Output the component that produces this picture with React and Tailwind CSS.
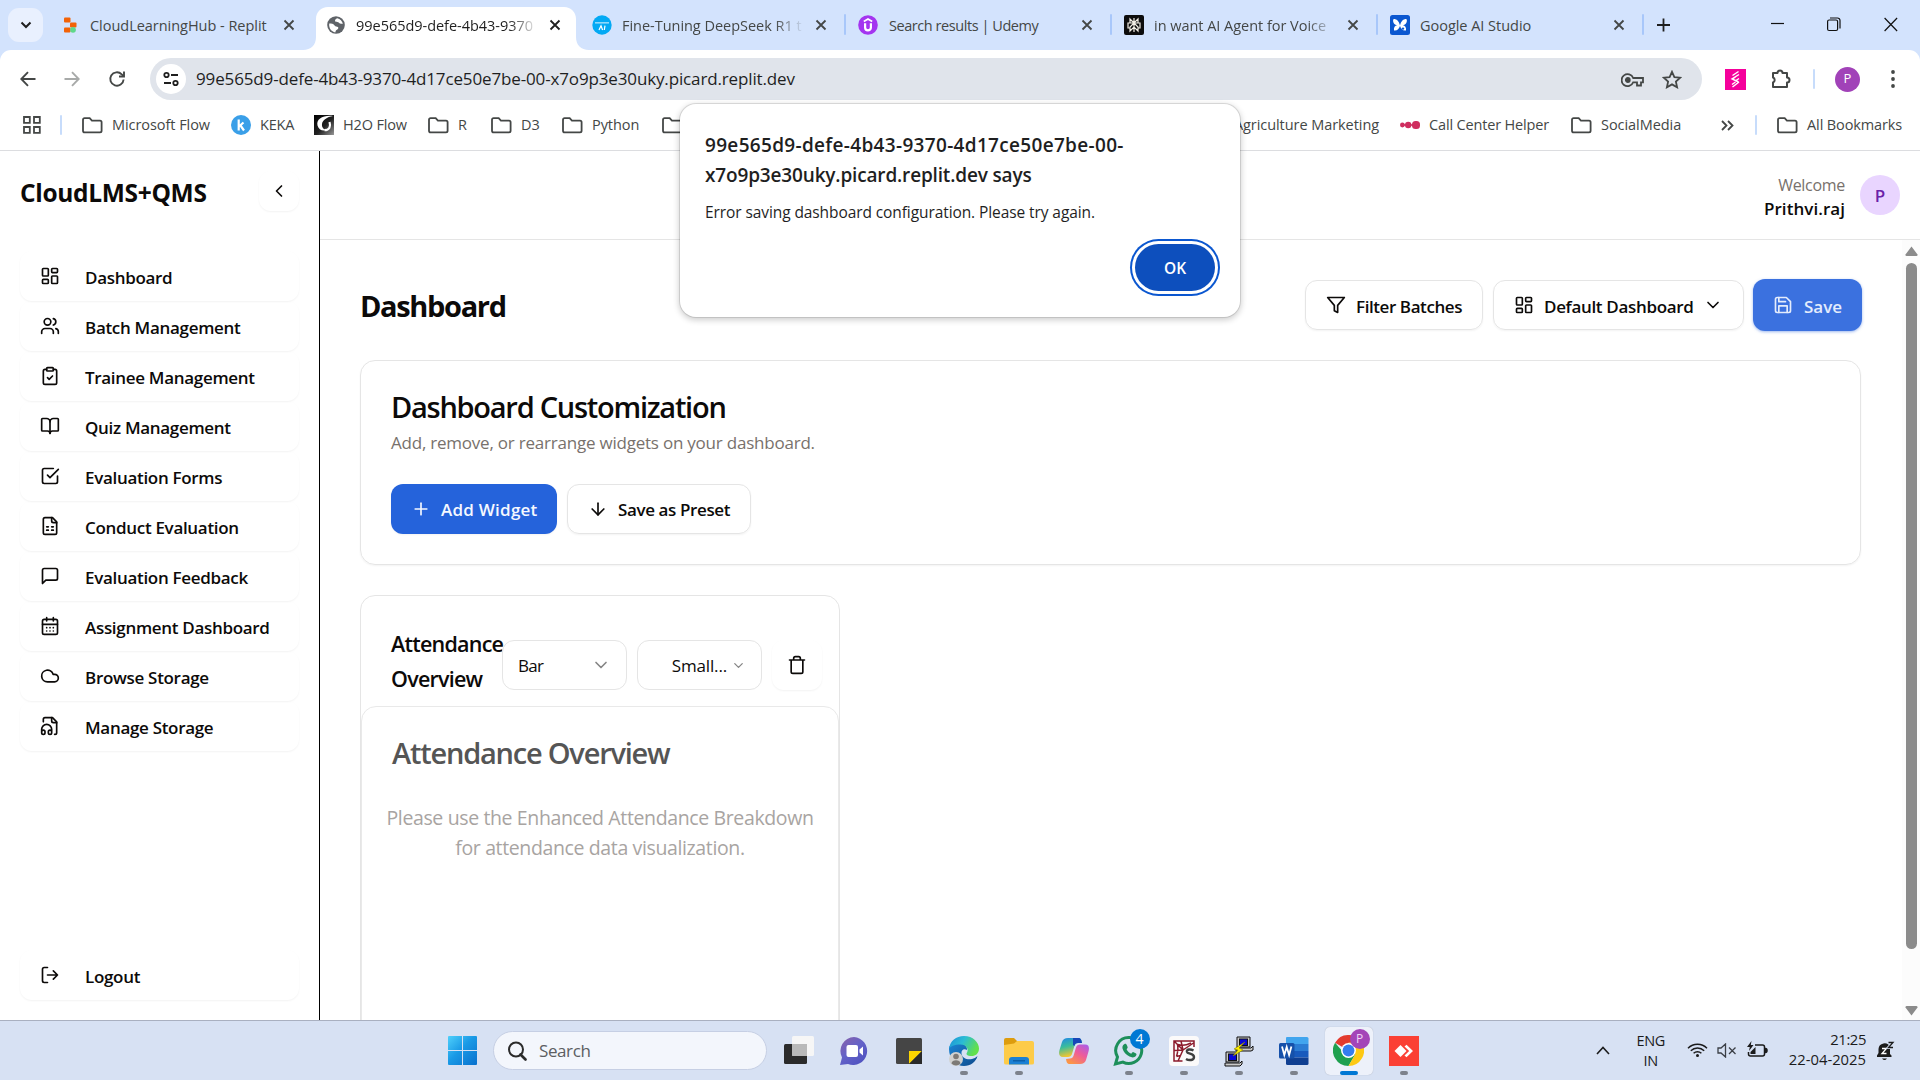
import { ArrowDown, BookOpen, ChevronDown, ChevronLeft, ClipboardCheck, Cloud, LayoutDashboard, Plus, Users } from "lucide-react";

/* ---------- shared drawing helpers ---------- */

function Stroke({ size = 20, children, className = "", width = 2 }) {
  return (
    <svg width={size} height={size} viewBox="0 0 24 24" fill="none" stroke="currentColor" strokeWidth={width} strokeLinecap="round" strokeLinejoin="round" className={`shrink-0 ${className}`}>
      {children}
    </svg>
  );
}

const CheckSquare = () => (
  <Stroke>
    <path d="m9 11 3 3L22 4" />
    <path d="M21 12v7a2 2 0 0 1-2 2H5a2 2 0 0 1-2-2V5a2 2 0 0 1 2-2h11" />
  </Stroke>
);
const FileSheet = () => (
  <Stroke>
    <path d="M15 2H6a2 2 0 0 0-2 2v16a2 2 0 0 0 2 2h12a2 2 0 0 0 2-2V7Z" />
    <path d="M14 2v4a2 2 0 0 0 2 2h4M8 13h2M14 13h2M8 17h2M14 17h2" />
  </Stroke>
);
const Message = () => (
  <Stroke>
    <path d="M21 15a2 2 0 0 1-2 2H7l-4 4V5a2 2 0 0 1 2-2h14a2 2 0 0 1 2 2z" />
  </Stroke>
);
const Calendar = () => (
  <Stroke>
    <rect width="18" height="18" x="3" y="4" rx="2" />
    <path d="M8 2v4M16 2v4M3 10h18M8 14h.01M12 14h.01M16 14h.01M8 18h.01M12 18h.01M16 18h.01" />
  </Stroke>
);
const FileAudio = () => (
  <Stroke>
    <path d="M17.5 22h.5a2 2 0 0 0 2-2V7l-5-5H6a2 2 0 0 0-2 2v3" />
    <path d="M14 2v4a2 2 0 0 0 2 2h4" />
    <path d="M2 19a2 2 0 1 1 4 0v1a2 2 0 1 1-4 0v-4a6 6 0 0 1 12 0v4a2 2 0 1 1-4 0v-1a2 2 0 1 1 4 0" />
  </Stroke>
);
const Exit = () => (
  <Stroke>
    <path d="M9 21H5a2 2 0 0 1-2-2V5a2 2 0 0 1 2-2h4M16 17l5-5-5-5M21 12H9" />
  </Stroke>
);
const Trash = () => (
  <Stroke>
    <path d="M3 6h18M19 6v14c0 1-1 2-2 2H7c-1 0-2-1-2-2V6M8 6V4c0-1 1-2 2-2h4c1 0 2 1 2 2v2" />
  </Stroke>
);
const Funnel = () => (
  <Stroke>
    <path d="M22 3H2l8 9.46V19l4 2v-8.54z" />
  </Stroke>
);
const Disk = () => (
  <Stroke>
    <path d="M19 21H5a2 2 0 0 1-2-2V5a2 2 0 0 1 2-2h11l5 5v11a2 2 0 0 1-2 2z" />
    <path d="M17 21v-8H7v8M7 3v5h8" />
  </Stroke>
);

/* ---------- browser chrome ---------- */

const Close = ({ className = "text-[#444746]" }) => (
  <svg width="12" height="12" viewBox="0 0 12 12" className={`shrink-0 ${className}`}>
    <path d="M1.5 1.5l9 9M10.5 1.5l-9 9" stroke="currentColor" strokeWidth="1.8" />
  </svg>
);

const ReplitIcon = () => (
  <svg width="20" height="20" viewBox="0 0 20 20" className="shrink-0">
    <rect x="4" y="2.5" width="6.5" height="5" rx="1" fill="#f26207" />
    <rect x="10" y="7.5" width="6.5" height="5" rx="1" fill="#f26207" />
    <rect x="4" y="12.5" width="6.5" height="5" rx="1" fill="#f26207" />
    <circle cx="13" cy="14.8" r="2.9" fill="#5fd88a" />
  </svg>
);
const GlobeIcon = () => (
  <svg width="20" height="20" viewBox="0 0 20 20" className="shrink-0">
    <circle cx="10" cy="10" r="8.8" fill="#5f6368" />
    <path d="M3.2 8.6C5.8 8 7.5 8.6 8.6 10.4c.9 1.4 2.3.8 3.3 1.6 1.1 1 .1 2.3-1 2.8-1.3.7-1.3 1.7-1.6 2.6-4-.6-6.6-4-6.1-8.8zM11.3 3.2c-1.6.8-2.6 1.7-2.2 2.8.4 1.2 2 .9 3.2 1.3 1 .4 1.3 1.5 2.6 1.5h2c-.6-2.8-2.8-5-5.6-5.6z" fill="#fff" />
  </svg>
);
const TowardsAiIcon = () => (
  <svg width="20" height="20" viewBox="0 0 20 20" className="shrink-0">
    <circle cx="10" cy="10" r="9.7" fill="#03a9f4" />
    <rect x="3" y="7" width="14" height="1.6" fill="#8fd8fa" />
    <path d="M7 15l2-4.3 1.6 4.3M13 10.7l-.7 4.3" stroke="#fff" strokeWidth="1.2" fill="none" />
  </svg>
);
const UdemyIcon = () => (
  <svg width="20" height="20" viewBox="0 0 20 20" className="shrink-0">
    <circle cx="10" cy="10" r="9.8" fill="#a435f0" />
    <path d="M5.800 6.500L10 4l4.200 2.500" stroke="#fff" strokeWidth="1.7" fill="none" />
    <path d="M7.100 8.200v4.300c0 3.700 5.800 3.700 5.800 0V8.200" stroke="#fff" strokeWidth="2.2" fill="none" />
  </svg>
);
const PerplexIcon = () => (
  <svg width="20" height="20" viewBox="0 0 20 20" className="shrink-0">
    <rect width="20" height="20" rx="2" fill="#0d0d0d" />
    <path d="M10 3v14M10 8L6 4v4h8V4l-4 4zM10 8l-4 4v4l4-4 4 4v-4l-4-4M6 8H4v5h2M14 8h2v5h-2" stroke="#f3efe6" strokeWidth="1.2" fill="none" />
  </svg>
);
const StudioIcon = () => (
  <svg width="20" height="20" viewBox="0 0 20 20" className="shrink-0">
    <rect width="20" height="20" rx="2.5" fill="#0b57d0" />
    <path d="M10 10.500C9 6 6.500 4 4 4c-1.500 0-1.500 5.500 3 6.300C5 10.500 3.500 12.500 4 15.500c3 .6 5-1.500 6-4.500 1 3 3 5.100 6 4.500.5-3-1-5-3-5.200 4.500-.8 4.500-6.300 3-6.300-2.500 0-5 2-6 6.500z" fill="#fff" />
    <circle cx="13" cy="13.6" r="1.2" fill="#0b57d0" />
  </svg>
);

const TABS = [
  { icon: <ReplitIcon />, title: "CloudLearningHub - Replit" },
  { icon: <GlobeIcon />, title: "99e565d9-defe-4b43-9370", active: true, fade: true },
  { icon: <TowardsAiIcon />, title: "Fine-Tuning DeepSeek R1 t", divider: true, fade: true },
  { icon: <UdemyIcon />, title: "Search results | Udemy", divider: true, tight: true },
  { icon: <PerplexIcon />, title: "in want AI Agent for Voice", divider: true, fade: true },
  { icon: <StudioIcon />, title: "Google AI Studio", divider: true },
];

function Tab({ icon, title, active, divider, tight, fade }) {
  return (
    <div className={`relative flex h-full w-[266px] shrink-0 items-start ${active ? "text-[#1f1f1f]" : "text-[#444746]"}`}>
      {active && (
        <svg width="286" height="43" viewBox="0 0 286 43" className="absolute -left-[11px] top-[7px]">
          <path d="M0 43c8 0 13-5 13-13V12C13 5 18 0 25 0h236c7 0 12 5 12 12v18c0 8 5 13 13 13z" fill="#fff" />
        </svg>
      )}
      <div className="relative flex h-[50px] w-full items-center pl-[12px]">
        {icon}
        <span className={`ml-[10px] w-[182px] whitespace-nowrap pt-[2px] text-[14.5px] ${fade ? "[mask-image:linear-gradient(to_right,black_84%,transparent)]" : ""} ${tight ? "pl-px tracking-[-0.44px]" : "tracking-[-0.03px]"}`}>{title}</span>
        <Close className={`ml-[11px] ${active ? "text-[#1f1f1f]" : "text-[#444746]"}`} />
      </div>
      {divider && <div className="absolute right-0 top-[14px] h-[21px] w-[2px] rounded bg-[#a8c7fa]" />}
    </div>
  );
}

function TabStrip() {
  return (
    <div className="flex h-[50px] bg-[#d3e3fd]">
      <div className="ml-[8px] mr-[5px] mt-[8px] flex h-[34px] w-[35px] items-center justify-center rounded-[11px] bg-[#e9f0fe]">
        <svg width="12" height="8" viewBox="0 0 12 8"><path d="M1.5 1.5L6 6l4.500-4.500" stroke="#1f1f1f" strokeWidth="2" fill="none" /></svg>
      </div>
      {TABS.map((t) => <Tab key={t.title} {...t} />)}
      <div className="ml-[13px] mt-[18px]">
        <svg width="13" height="14" viewBox="0 0 13 14"><path d="M6.5 .5v13M0 7h13" stroke="#1f1f1f" strokeWidth="1.8" /></svg>
      </div>
      <div className="ml-auto flex pt-[17px]">
        <svg width="14" height="14" viewBox="0 0 14 14" className="mr-[42px]"><path d="M0 6.500h13" stroke="#111" strokeWidth="1.2" /></svg>
        <svg width="14" height="15" viewBox="0 0 14 15" className="mr-[43px]" fill="none" stroke="#111" strokeWidth="1.2"><rect x=".6" y="3" width="10" height="10.5" rx="1.5" /><path d="M3 1h7.500a2.500 2.500 0 0 1 2.500 2.500V11.500" /></svg>
        <svg width="14" height="15" viewBox="0 0 14 15" className="mr-[22px]"><path d="M.6 1l12.500 13M13.100 1L.6 14" stroke="#111" strokeWidth="1.2" /></svg>
      </div>
    </div>
  );
}

function Toolbar() {
  return (
    <div className="flex h-[58px] items-center bg-[#d3e3fd]">
      <div className="flex h-full w-full items-center rounded-t-[11px] bg-white text-[#444746]">
        <svg width="16" height="16" viewBox="0 0 16 16" className="ml-[20px]" fill="none" stroke="#444746" strokeWidth="1.9"><path d="M15.500 8H1.500M8 1.200L1.300 8 8 14.800" /></svg>
        <svg width="16" height="16" viewBox="0 0 16 16" className="ml-[28px]" fill="none" stroke="#a8aaa9" strokeWidth="1.9"><path d="M.5 8h14M8 1.200L14.700 8 8 14.800" /></svg>
        <svg width="18" height="18" viewBox="0 0 18 18" className="ml-[28px]" fill="none" stroke="#444746" strokeWidth="1.9"><path d="M15.600 9.500A6.700 6.700 0 1 1 13.700 4.300L15.600 6.200" /><path d="M16 1.500v5h-5" /></svg>
        <div className="ml-[24px] flex h-[42px] w-[1552px] items-center rounded-full bg-[#e0e4eb]">
          <div className="ml-[6px] flex size-[30px] items-center justify-center rounded-full bg-white">
            <svg width="16" height="16" viewBox="0 0 16 16" fill="none" stroke="#1f1f1f" strokeWidth="1.8"><circle cx="3.5" cy="4" r="2.2" /><path d="M8 4h7M1 12h7" /><circle cx="12.5" cy="12" r="2.2" /></svg>
          </div>
          <span className="ml-[10px] text-[17px] tracking-[-0.14px] text-[#1f1f1f]">99e565d9-defe-4b43-9370-4d17ce50e7be-00-x7o9p3e30uky.picard.replit.dev</span>
          <svg width="23" height="16" viewBox="0 0 23 16" className="ml-auto mr-[18px] mt-px" fill="none" stroke="#444746" strokeWidth="1.8"><path d="M12.200 6A6 6 0 1 0 12.200 10.300H16V13.500H20V10.300H22V6z" /><circle cx="6.8" cy="8" r="2" fill="#444746" /></svg>
          <svg width="20" height="19" viewBox="0 0 20 19" className="mr-[20px]" fill="none" stroke="#444746" strokeWidth="1.8"><path d="M10 1.800l2.400 5.300 5.800.6-4.300 3.900 1.200 5.700L10 14.400l-5.100 2.900 1.200-5.700L1.800 7.700l5.800-.6z" /></svg>
        </div>
        <svg width="21" height="21" viewBox="0 0 21 21" className="ml-[23px]"><rect width="21" height="21" fill="#f5009b" /><path d="M13.500 2.500L7.500 6.500M14 5.500L7 10l6.500 3M7.500 10l3-2M14 9.500l-3 2M14 13l-6.500 5M7 15.500l3.500-2.500" stroke="#fff" strokeWidth="1.4" fill="none" /></svg>
        <svg width="22" height="22" viewBox="0 0 22 22" className="ml-[24px] text-[#444746]"><path d="M3 5h4.500a2.500 2.500 0 0 1 5 0H17v4.500a2.500 2.500 0 0 1 0 5V19H3v-4.500a2.700 2.700 0 0 0 0-5z" fill="none" stroke="currentColor" strokeWidth="2" strokeLinejoin="round" /></svg>
        <div className="ml-[21px] h-[20px] w-[2px] rounded bg-[#c7dcfb]" />
        <div className="ml-[20px] flex size-[25px] items-center justify-center rounded-full bg-[#a142b8] text-[13px] text-white">P</div>
        <svg width="6" height="20" viewBox="0 0 6 20" className="ml-[30px]" fill="#444746"><circle cx="3" cy="3" r="1.9" /><circle cx="3" cy="10" r="1.9" /><circle cx="3" cy="17" r="1.9" /></svg>
      </div>
    </div>
  );
}

const Folder = () => (
  <svg width="21" height="17" viewBox="0 0 21 17" className="shrink-0"><path d="M1 2.800Q1 1.200 2.600 1.200H7.700L9.900 3.600H18Q19.600 3.600 19.600 5.200V13.800Q19.600 15.400 18 15.400H2.600Q1 15.400 1 13.800z" fill="none" stroke="#444746" strokeWidth="1.8" /></svg>
);
const Keka = () => (
  <svg width="20" height="20" viewBox="0 0 20 20"><circle cx="10" cy="10" r="10" fill="#3a9fe8" /><path d="M7.700 4.500v11M8 11.500l4.500-4M9.500 10.500l3.500 5" stroke="#fff" strokeWidth="2.2" fill="none" /></svg>
);
const H2O = () => (
  <svg width="20" height="20" viewBox="0 0 20 20">
    <defs><linearGradient id="h2o" x1="0" y1="0" x2="1" y2="1"><stop offset="0" stopColor="#000" /><stop offset=".55" stopColor="#222" /><stop offset="1" stopColor="#999" /></linearGradient></defs>
    <rect width="20" height="20" fill="url(#h2o)" />
    <path d="M19 1C9 0 2 4 3.500 10.500c1 4 5 6 9 4.500-3-.5-5-3-4.500-6C8.500 5 13 2 19 1z" fill="#fff" />
    <path d="M10.500 15.200c5 0 6.500-4 5-8.200" stroke="#fff" strokeWidth="2.2" fill="none" />
  </svg>
);
const CallCenter = () => (
  <svg width="20" height="10" viewBox="0 0 20 10" fill="#cf2e5f"><circle cx="2.4" cy="5" r="2.4" /><circle cx="8.2" cy="5" r="3.2" /><rect x="12" y="1" width="8" height="8" rx="3.5" /><path d="M2 4.200h12v1.600H2z" /></svg>
);

function Bookmark({ icon, label, className = "" }) {
  return (
    <div className={`flex shrink-0 items-center gap-[9px] whitespace-nowrap ${className}`}>
      {icon}
      <span>{label}</span>
    </div>
  );
}

function BookmarkBar() {
  return (
    <div className="flex h-[43px] items-center border-b border-[#dcdde0] bg-white pb-[8px] text-[14.5px] tracking-[-0.06px] text-[#444746]">
      <svg width="18" height="18" viewBox="0 0 18 18" className="ml-[23px] shrink-0" fill="none" stroke="#444746" strokeWidth="1.8"><path d="M1 1h5.800v5.800H1zM11 1h5.800v5.800H11zM1 11h5.800v5.800H1zM11 11h5.800v5.800H11z" /></svg>
      <div className="ml-[19px] mr-[20px] h-[20px] w-[2px] shrink-0 rounded bg-[#c7dcfb]" />
      <Bookmark icon={<Folder />} label="Microsoft Flow" className="w-[149px]" />
      <Bookmark icon={<Keka />} label="KEKA" className="w-[83px] gap-[8px] tracking-[-0.2px]" />
      <Bookmark icon={<H2O />} label="H2O Flow" className="w-[114px] gap-[7px] tracking-[-0.15px]" />
      <Bookmark icon={<Folder />} label="R" className="w-[63px]" />
      <Bookmark icon={<Folder />} label="D3" className="w-[71px]" />
      <Bookmark icon={<Folder />} label="Python" className="w-[100px]" />
      <Bookmark icon={<Folder />} label="" className="w-[30px]" />
      <Bookmark label="Agriculture Marketing" className="ml-auto mr-[21px]" />
      <Bookmark icon={<CallCenter />} label="Call Center Helper" className="w-[171px] gap-[6px] tracking-[-0.16px]" />
      <Bookmark icon={<Folder />} label="SocialMedia" className="w-[150px]" />
      <svg width="13" height="11" viewBox="0 0 13 11" className="mr-[21px] shrink-0" fill="none" stroke="#444746" strokeWidth="1.8"><path d="M1 1l4.500 4.500L1 10M7 1l4.500 4.500L7 10" /></svg>
      <div className="h-[20px] w-[2px] shrink-0 rounded bg-[#c7dcfb]" />
      <Bookmark icon={<Folder />} label="All Bookmarks" className="ml-[20px] mr-[18px] tracking-[-0.13px]" />
    </div>
  );
}

function AlertDialog() {
  return (
    <div className="absolute left-[680px] top-[104px] h-[213px] w-[560px] rounded-[16px] bg-white pl-[25px] pt-[26px] text-[#1f1f1f] shadow-[0_0_0_1px_rgba(0,0,0,0.1),0_2px_6px_1px_rgba(0,0,0,0.2)]">
      <div className="text-[19px] font-semibold leading-[30px]">
        <div className="tracking-[0.32px]">99e565d9-defe-4b43-9370-4d17ce50e7be-00-</div>
        <div className="tracking-[-0.16px]">x7o9p3e30uky.picard.replit.dev says</div>
      </div>
      <div className="mt-[10px] text-[15.5px] leading-[24px] tracking-[-0.09px]">Error saving dashboard configuration. Please try again.</div>
      <div className="mr-[25px] mt-[20px] flex justify-end">
        <button className="h-[47px] w-[80px] rounded-[24px] bg-[#0d4fbd] pt-[2px] text-[15.5px] font-semibold text-white ring-2 ring-[#0b57d0] ring-offset-[3px] ring-offset-white">OK</button>
      </div>
    </div>
  );
}

/* ---------- web page ---------- */

const NAV = [
  { icon: <LayoutDashboard size={20} />, label: "Dashboard" },
  { icon: <Users size={20} />, label: "Batch Management" },
  { icon: <ClipboardCheck size={20} />, label: "Trainee Management" },
  { icon: <BookOpen size={20} />, label: "Quiz Management" },
  { icon: <CheckSquare />, label: "Evaluation Forms" },
  { icon: <FileSheet />, label: "Conduct Evaluation" },
  { icon: <Message />, label: "Evaluation Feedback" },
  { icon: <Calendar />, label: "Assignment Dashboard" },
  { icon: <Cloud size={20} />, label: "Browse Storage" },
  { icon: <FileAudio />, label: "Manage Storage" },
];

function NavItem({ icon, label }) {
  return (
    <a className="flex h-[50px] items-center gap-[25px] rounded-[12px] pl-[20px] text-[17px] font-semibold tracking-[-0.31px] shadow-[0_1px_2px_0_rgba(0,0,0,0.05)]">
      {icon}
      <span className="pt-[3px]">{label}</span>
    </a>
  );
}

function Sidebar() {
  return (
    <aside className="flex w-[320px] shrink-0 flex-col border-r border-black px-[20px] pb-[20px] pt-[20px]">
      <div className="flex h-[40px] items-center justify-between">
        <span className="pt-[4px] text-[24.5px] font-bold tracking-[-0.32px]">CloudLMS+QMS</span>
        <div className="flex size-[40px] items-center justify-center rounded-[12px] shadow-[0_1px_2px_0_rgba(0,0,0,0.05)]">
          <ChevronLeft size={20} />
        </div>
      </div>
      <nav className="mt-[40px]">
        {NAV.map((n) => <NavItem key={n.label} {...n} />)}
      </nav>
      <div className="mt-auto">
        <NavItem icon={<Exit />} label="Logout" />
      </div>
    </aside>
  );
}

function Button({ icon, label, className }) {
  return (
    <button className={`flex h-[50px] items-center rounded-[12px] text-[17px] font-semibold shadow-[0_1px_2px_0_rgba(0,0,0,0.05)] ${className}`}>
      {icon}
      {label}
    </button>
  );
}

function Customization() {
  return (
    <section className="mr-px mt-[29px] h-[205px] shrink-0 rounded-[15px] border border-[#e5e5e5] px-[30px] pt-[27px] shadow-[0_1px_2px_0_rgba(0,0,0,0.05)]">
      <h2 className="text-[29px] font-semibold leading-[38px] tracking-[-1.26px]">Dashboard Customization</h2>
      <p className="mt-[4px] text-[17px] leading-[25px] tracking-[-0.22px] text-[#78716c]">Add, remove, or rearrange widgets on your dashboard.</p>
      <div className="mt-[29px] flex gap-[10px]">
        <Button icon={<Plus size={20} />} label={<span className="pt-[2px]">Add Widget</span>} className="w-[166px] gap-[10px] bg-[#2563db] pl-[20px] tracking-[0.24px] text-[#f5f8ff]" />
        <Button icon={<ArrowDown size={20} />} label={<span className="pt-[2px]">Save as Preset</span>} className="w-[184px] gap-[10px] border border-[#e5e5e5] pl-[20px] tracking-[-0.38px]" />
      </div>
    </section>
  );
}

function Select({ label, className, chevron }) {
  return (
    <div className={`flex h-[50px] w-[125px] shrink-0 items-center rounded-[12px] border border-[#e5e5e5] bg-white text-[17px] ${className}`}>
      <span className="pt-[2px]">{label}</span>
      <ChevronDown size={chevron} className="text-[#858585]" />
    </div>
  );
}

function Widget() {
  return (
    <section className="mt-[30px] h-[500px] w-[480px] shrink-0 rounded-t-[15px] border border-[#e5e5e5]">
      <div className="flex h-[110px] pl-[30px]">
        <h3 className="w-[111px] shrink-0 pt-[30px] text-[21.5px] font-semibold leading-[35px] tracking-[-0.76px]">Attendance Overview</h3>
        <div className="flex pt-[44px]">
          <Select label="Bar" chevron={20} className="justify-between pl-[15px] pr-[15px] tracking-[-0.7px]" />
          <Select label="Small..." chevron={15} className="ml-[10px] justify-end gap-[4px] pr-[15px] tracking-[-0.16px]" />
          <div className="ml-[10px] flex size-[50px] items-center justify-center rounded-[12px] shadow-[0_1px_2px_0_rgba(0,0,0,0.05)]">
            <Trash />
          </div>
        </div>
      </div>
      <div className="h-[390px] rounded-t-[15px] border border-[#e9e9e9] pt-[27px]">
        <h4 className="pl-[30px] text-[29px] font-semibold leading-[38px] tracking-[-1.22px] text-[#555]">Attendance Overview</h4>
        <p className="mt-[31px] text-center text-[19.5px] leading-[30px] tracking-[-0.37px] text-[#a8a4a2]">
          Please use the Enhanced Attendance Breakdown<br />for attendance data visualization.
        </p>
      </div>
    </section>
  );
}

function Page() {
  return (
    <div className="flex h-[869px] overflow-hidden bg-white text-[#0c0a09]">
      <Sidebar />
      <div className="flex min-w-0 flex-1 flex-col">
        <header className="flex h-[89px] shrink-0 items-center justify-end gap-[15px] border-b border-[#e5e5e5] pr-[20px]">
          <div className="pt-[3px] text-right leading-[24px]">
            <div className="text-[16px] tracking-[-0.3px] text-[#78716c]">Welcome</div>
            <div className="text-[17px] font-semibold tracking-[0.05px]">Prithvi.raj</div>
          </div>
          <div className="flex size-[40px] items-center justify-center rounded-full bg-[#e9d5ff] pt-[1px] text-[17px] font-semibold text-[#6b21a8]">P</div>
        </header>
        <div className="flex min-h-0 flex-1">
          <main className="flex min-w-0 flex-1 flex-col overflow-hidden pl-[40px] pr-[40px]">
            <div className="flex pt-[40px]">
              <h1 className="flex h-[51px] items-center pt-[1px] text-[29px] font-bold tracking-[-1.35px]">Dashboard</h1>
              <div className="ml-auto flex">
                <Button icon={<Funnel />} label={<span className="pt-[3px]">Filter Batches</span>} className="w-[178px] gap-[10px] border border-[#e5e5e5] pl-[20px] tracking-[-0.42px]" />
                <Button icon={<LayoutDashboard size={20} />} label={<span className="flex items-center pt-[3px]">Default Dashboard<ChevronDown size={20} className="-mt-[4px] ml-[10px]" /></span>} className="ml-[10px] w-[251px] gap-[10px] border border-[#e5e5e5] pl-[20px] tracking-[-0.33px]" />
                <Button icon={<Disk />} label={<span className="pt-[3px]">Save</span>} className="-mt-[1px] ml-[9px] h-[52px] w-[109px] gap-[11px] bg-[#3b71df] pl-[20px] text-[#e4ecfc] shadow-[0_1px_3px_0_rgba(59,113,223,0.5)]" />
              </div>
            </div>
            <Customization />
            <Widget />
          </main>
          <div className="flex w-[18px] shrink-0 flex-col items-center bg-[#fcfcfc]">
            <svg width="13" height="11" viewBox="0 0 13 11" className="mt-[6px]"><path d="M6.500 .5L12.500 8.500Q12.800 10 11.500 10H1.500Q.2 10 .5 8.500z" fill="#8b8b8b" /></svg>
            <div className="mt-[6px] h-[686px] w-[11px] rounded-full bg-[#8b8b8b]" />
            <svg width="13" height="11" viewBox="0 0 13 11" className="mt-[56px]"><path d="M6.500 10.500L12.500 2.500Q12.800 1 11.500 1H1.500Q.2 1 .5 2.500z" fill="#8b8b8b" /></svg>
          </div>
        </div>
      </div>
    </div>
  );
}

/* ---------- taskbar ---------- */

const TaskView = () => (
  <svg width="30" height="30" viewBox="0 0 30 30">
    <rect x="0" y="8" width="23" height="20" rx="1.5" fill="#2b2b2b" />
    <rect x="8" y="0" width="22" height="20" rx="1.5" fill="#f6f6f6" />
    <path d="M8 8h15v12H9.500Q8 20 8 18.500z" fill="#b9b9b9" />
  </svg>
);
const Chat = () => (
  <svg width="30" height="30" viewBox="0 0 30 30">
    <defs><linearGradient id="chat" x1="0" y1="0" x2=".8" y2="1"><stop offset="0" stopColor="#8b62a8" /><stop offset=".5" stopColor="#6462c8" /><stop offset="1" stopColor="#4f52c0" /></linearGradient></defs>
    <path d="M15 1a14 14 0 1 1-6 27L1 29l2-7.500A14 14 0 0 1 15 1z" fill="url(#chat)" />
    <rect x="7.5" y="9" width="11.5" height="12" rx="2" fill="#fff" />
    <path d="M20.500 13.500L24 10.500v9l-3.500-3z" fill="#fff" />
  </svg>
);
const Sticky = () => (
  <svg width="30" height="30" viewBox="0 0 30 30">
    <rect x="2" y="2" width="26" height="26" rx="1.5" fill="#454545" />
    <path d="M15 15h13L15 28z" fill="#fcd500" /><path d="M28 15v13H15z" fill="#2a2a2a" />
  </svg>
);
const Edge = () => (
  <svg width="32" height="32" viewBox="0 0 32 32">
    <defs>
      <linearGradient id="edgeTop" x1="0" y1="0" x2="1" y2=".4"><stop offset="0" stopColor="#1a8fd8" /><stop offset=".5" stopColor="#2bbcd4" /><stop offset="1" stopColor="#61e04c" /></linearGradient>
      <linearGradient id="edgeLow" x1="0" y1="0" x2="1" y2="1"><stop offset="0" stopColor="#1b86d6" /><stop offset="1" stopColor="#0d4a8c" /></linearGradient>
    </defs>
    <path d="M1 14c0-5 6-8 12-6 4 1.200 6.500 4 6 7-3-2-6 0-5.500 3.500C14 23 19 25 24 24c2-.4 4-1.500 5.500-3C28 27 22.500 31 16 31 8 31 1 24 1 14z" fill="url(#edgeLow)" />
    <path d="M1 14C2 6 8 1 16 1c9 0 15 6.500 15 12.500 0 5-3.500 7.500-7.500 7.500-4 0-6-1.500-4.500-3.500 2-3-.5-8-6.500-8C6.500 9.500 2 11.500 1 14z" fill="url(#edgeTop)" />
    <circle cx="8" cy="24" r="7" fill="#d1d1cf" /><circle cx="8" cy="21.5" r="2.8" fill="#7d7a76" /><path d="M3.500 28.500c0-4.500 9-4.500 9 0-2.500 2.500-6.500 2.500-9 0z" fill="#7d7a76" />
  </svg>
);
const Explorer = () => (
  <svg width="30" height="30" viewBox="0 0 30 30">
    <path d="M0 4Q0 2 2 2h8l3 3v5H0z" fill="#dd9c0e" />
    <path d="M0 9L10 7.500 13 5H28Q30 5 30 7V27Q30 28.500 28 28.500H2Q0 28.500 0 27z" fill="#fdcb48" />
    <path d="M5 28.500V24Q5 21 8 21h14q3 0 3 3v4.500z" fill="#1a80d4" /><rect x="9" y="24" width="12" height="1.5" fill="#0c5fa8" />
  </svg>
);
const Copilot = () => (
  <svg width="30" height="30" viewBox="0 0 30 30">
    <defs>
      <linearGradient id="cpa" x1="0" y1="0" x2=".3" y2="1"><stop offset="0" stopColor="#1f86ea" /><stop offset=".5" stopColor="#3bbd9b" /><stop offset="1" stopColor="#f6c62e" /></linearGradient>
      <linearGradient id="cpb" x1="1" y1="0" x2=".3" y2="1"><stop offset="0" stopColor="#a35cf0" /><stop offset=".5" stopColor="#ee5b9b" /><stop offset="1" stopColor="#fb9547" /></linearGradient>
    </defs>
    <path d="M9 2h10c3 0 3.500 2 4 5h-4c-2 0-3 1-3.600 3l-2.400 8c-.6 2-2 3-4 3H4c-4 0-4.500-3-3.500-7L3 6c.8-2.500 3-4 6-4z" fill="url(#cpa)" />
    <path d="M14 2h5c3 0 3.500 2 4 5h-4c-2 0-3 1-3.600 3L14 9z" fill="#1746b8" />
    <path d="M21 28H11c-3 0-3.500-2-4-5l4-.5c2 0 3-1 3.600-3L17 11.500c.6-2 2-3 4-3h5c4 0 4.500 3 3.500 7L27 24c-.8 2.500-3 4-6 4z" fill="url(#cpb)" />
  </svg>
);
const WhatsApp = () => (
  <svg width="32" height="32" viewBox="0 0 32 32">
    <path d="M16.500 2.500a13 13 0 1 1-6.600 24.600L2.500 29l2-7A13 13 0 0 1 16.500 2.500z" fill="none" stroke="#1d8f5a" strokeWidth="3" />
    <path d="M11.500 9c1.200-.5 2 .2 2.500 1.500l.6 1.500c.3 1-.5 1.500-1 2.200 1 2 2.500 3.500 4.700 4.500.8-.7 1.200-1.900 2.200-1.500l2.200 1c1 .5 1 1.500.3 2.600-1.500 2-4 2-6.500.8-3.500-1.700-6-4.500-7-8-.4-2 .5-4 2-4.600z" fill="#1d8f5a" />
  </svg>
);
const Spyder = () => (
  <svg width="30" height="30" viewBox="0 0 30 30">
    <rect width="30" height="30" rx="4" fill="#fbfafa" />
    <path d="M13.500 25H5V5H25V11M14 14L5.500 5.500M14 14L12 5M14 14L24.500 7M5 14.500L14 14M9 25l5-11M8.500 8.500c1 4 .5 7-1 12M9 8.500c4 1.500 9 .5 13-1.500M7.500 20.500l4-1" stroke="#8c1a2b" strokeWidth="1.5" fill="none" />
    <path d="M24.500 14.500c-3-1.700-7-1.300-6.600 1.200.5 2.500 7.100 1.500 7.100 5.200 0 3.600-5 3.900-8 2" stroke="#3f3f3f" strokeWidth="2.4" fill="none" />
  </svg>
);
const Putty = () => (
  <svg width="32" height="32" viewBox="0 0 32 32" stroke="#111">
    <path d="M14 2h13v10H14z" fill="#c9c9c9" /><rect x="16.5" y="4" width="8" height="6.5" fill="#0808d8" /><path d="M13 13h15l2-2v4l-2 1H13z" fill="#c9c9c9" />
    <path d="M3 17h13v10H3z" fill="#c9c9c9" /><rect x="5.5" y="19" width="8" height="6.5" fill="#0808d8" /><path d="M2 28h15l2-2v3l-2 2H2z" fill="#c9c9c9" />
    <path d="M22 7L11 14l4 1-5 6 10-6-4-2z" fill="#ffef00" stroke="#8a8200" strokeWidth=".6" />
  </svg>
);
const Word = () => (
  <svg width="30" height="30" viewBox="0 0 30 30">
    <path d="M8 1h20q1.500 0 1.500 1.500V8H7V2q0-1 1-1z" fill="#41a5ee" /><path d="M7 8h22.500v7H7z" fill="#2b7cd3" /><path d="M7 15h22.500v6.500H7z" fill="#185abd" /><path d="M7 21.500h22.500v6q0 1.500-1.500 1.500H8.500Q7 29 7 27.500z" fill="#103f91" />
    <rect x="0" y="7" width="15.5" height="15.5" rx="1.5" fill="#1651aa" /><path d="M3 10.500l2.300 8.500 2.400-8 2.400 8 2.300-8.500" stroke="#fff" strokeWidth="1.8" fill="none" />
  </svg>
);
const Chrome = () => (
  <svg width="31" height="31" viewBox="0 0 30 30">
    <path d="M15 15L2 7.500A15 15 0 0 1 28 7.500H15z" fill="#e33b2e" /><path d="M15 15h-6.500L2 7.500A15 15 0 0 0 15 30l6.500-11.200z" fill="#1fa04f" /><path d="M15 7.500h13A15 15 0 0 1 15 30l6.500-11.300z" fill="#fdc914" />
    <circle cx="15" cy="15" r="7.2" fill="#fff" /><circle cx="15" cy="15" r="5.7" fill="#347def" />
  </svg>
);
const AnyDesk = () => (
  <svg width="30" height="30" viewBox="0 0 30 30">
    <rect width="30" height="30" fill="#fb4034" /><path d="M11.500 9l6 6-6 6-6-6z" fill="#fff" /><path d="M15.500 10.500L17.500 8.800 24 15l-6.500 6.200-2-1.700L20.200 15z" fill="#fff" />
  </svg>
);

const APPS = [
  { icon: <TaskView />, key: "view" },
  { icon: <Chat />, key: "chat" },
  { icon: <Sticky />, key: "sticky" },
  { icon: <Edge />, key: "edge", open: true },
  { icon: <Explorer />, key: "files", open: true },
  { icon: <Copilot />, key: "copilot" },
  { icon: <WhatsApp />, key: "wa", open: true, badge: "4" },
  { icon: <Spyder />, key: "spyder", open: true },
  { icon: <Putty />, key: "putty", open: true },
  { icon: <Word />, key: "word", open: true },
  { icon: <Chrome />, key: "chrome", focused: true, badge: "P" },
  { icon: <AnyDesk />, key: "anydesk", open: true },
];

function TaskApp({ icon, open, focused, badge }) {
  return (
    <div className="flex w-[55px] justify-center">
      <div className={`relative flex h-[48px] w-[48px] items-center justify-center rounded-[5px] ${focused ? "bg-[#edf1fa] shadow-[0_0_1px_rgba(0,0,0,0.25)]" : ""}`}>
        {icon}
        {badge === "4" && <span className="absolute right-[3px] top-[2px] flex size-[20px] items-center justify-center rounded-full bg-[#0078d4] text-[14px] text-white">4</span>}
        {badge === "P" && <span className="absolute right-[3px] top-[2px] flex size-[20px] items-center justify-center rounded-full bg-[#a445b8] text-[12px] font-medium text-[#f0d6f5]">P</span>}
        {open && <span className="absolute bottom-0 left-[20px] h-[4px] w-[8px] rounded-full bg-[#7d828c]" />}
        {focused && <span className="absolute bottom-0 left-[15px] h-[4px] w-[18px] rounded-full bg-[#0078d4]" />}
      </div>
    </div>
  );
}

function Taskbar() {
  return (
    <footer className="flex h-[60px] items-center border-t border-[#a9b0c0] bg-[#d7e1f3] text-[#1b1b1b]">
      <svg width="29" height="29" viewBox="0 0 29 29" className="ml-[448px] shrink-0">
        <defs><linearGradient id="win" x1="0" y1="0" x2="1" y2="1"><stop offset="0" stopColor="#4fd0fb" /><stop offset=".45" stopColor="#1a9ae6" /><stop offset="1" stopColor="#0870cd" /></linearGradient></defs>
        <path d="M1 0h13v14H0V1q0-1 1-1zM15 0h13q1 0 1 1v13H15zM0 15h14v14H1q-1 0-1-1zM15 15h14v13q0 1-1 1H15z" fill="url(#win)" />
      </svg>
      <div className="ml-[16px] flex h-[39px] w-[274px] items-center rounded-full border border-[#c6cfe4] bg-[#f3f6fc]">
        <svg width="20" height="20" viewBox="0 0 20 20" className="ml-[13px]" fill="none" stroke="#2b2b2b" strokeWidth="2"><circle cx="9" cy="8.5" r="7" /><path d="M13.500 13.500l5 5" strokeWidth="2.6" strokeLinecap="round" /></svg>
        <span className="ml-[12px] text-[17px] tracking-[-0.4px] text-[#5c5e62]">Search</span>
      </div>
      <div className="ml-[4px] flex">
        {APPS.map(({ key, ...a }) => <TaskApp key={key} {...a} />)}
      </div>
      <div className="ml-auto flex items-center">
        <svg width="14" height="9" viewBox="0 0 14 9" className="mr-[26px]"><path d="M1 8l6-6.500L13 8" stroke="#1b1b1b" strokeWidth="1.6" fill="none" /></svg>
        <div className="mr-[21px] w-[30px] text-center text-[14.5px] leading-[20px] tracking-[-0.3px]">ENG<br />IN</div>
        <svg width="21" height="16" viewBox="0 0 21 16" className="mb-px mr-[9px]" fill="none" stroke="#1b1b1b" strokeWidth="1.4"><path d="M1 6.200a13.300 13.300 0 0 1 19 0M3.800 8.800a9.400 9.400 0 0 1 13.400 0M6.600 11.300a5.500 5.500 0 0 1 7.800 0" /><circle cx="10.5" cy="13.5" r="1.5" fill="#1b1b1b" stroke="none" /></svg>
        <svg width="20" height="15" viewBox="0 0 20 15" className="mb-px mr-[10px]" fill="none" stroke="#3b3f46" strokeWidth="1.3"><path d="M1 5h3l4.500-4v13L4 10H1zM12 4.500l6.500 6.500M18.500 4.500L12 11" /></svg>
        <svg width="21" height="17" viewBox="0 0 21 17" className="mb-[3px] mr-[21px]" fill="none" stroke="#1b1b1b" strokeWidth="1.5"><path d="M8 4h7.500q2 0 2 2v7q0 2-2 2h-12q-2 0-2-2v-2" /><path d="M18.500 7.500q1.500 0 1.500 2t-1.500 2z" fill="#1b1b1b" /><path d="M3.500 13V11L8.500 6v7z" fill="#1b1b1b" stroke="none" /><path d="M4.500 0L0 6h2.800L2 10l4.500-6H3.800z" fill="#1b1b1b" stroke="none" /></svg>
        <div className="mb-[3px] mr-[11px] text-right text-[14.8px] leading-[20px]"><span className="tracking-[-0.4px]">21:25</span><br />22-04-2025</div>
        <svg width="18" height="20" viewBox="0 0 18 20" className="mr-[25px]"><path d="M0 16V14.500L1.500 12V8A6 6 0 0 1 13 6v7l1.500 1.500V16z" fill="#1b1b1b" /><path d="M5 17.500h5q-2.500 3-5 0z" fill="#1b1b1b" /><path d="M5 7.500h4.500L5 12.500h4.500" stroke="#fff" strokeWidth="1.3" fill="none" /><path d="M11.500 1.500h4.500l-4.500 5h4.500" stroke="#d7e1f3" strokeWidth="3" fill="none" /><path d="M11.500 1.500h4.500l-4.500 5h4.500" stroke="#1b1b1b" strokeWidth="1.3" fill="none" /></svg>
      </div>
    </footer>
  );
}

export default function App() {
  return (
    <div className="relative flex h-[1080px] w-[1920px] flex-col overflow-hidden bg-white font-['Open_Sans','Noto_Sans',sans-serif]">
      <TabStrip />
      <Toolbar />
      <BookmarkBar />
      <Page />
      <Taskbar />
      <AlertDialog />
    </div>
  );
}
